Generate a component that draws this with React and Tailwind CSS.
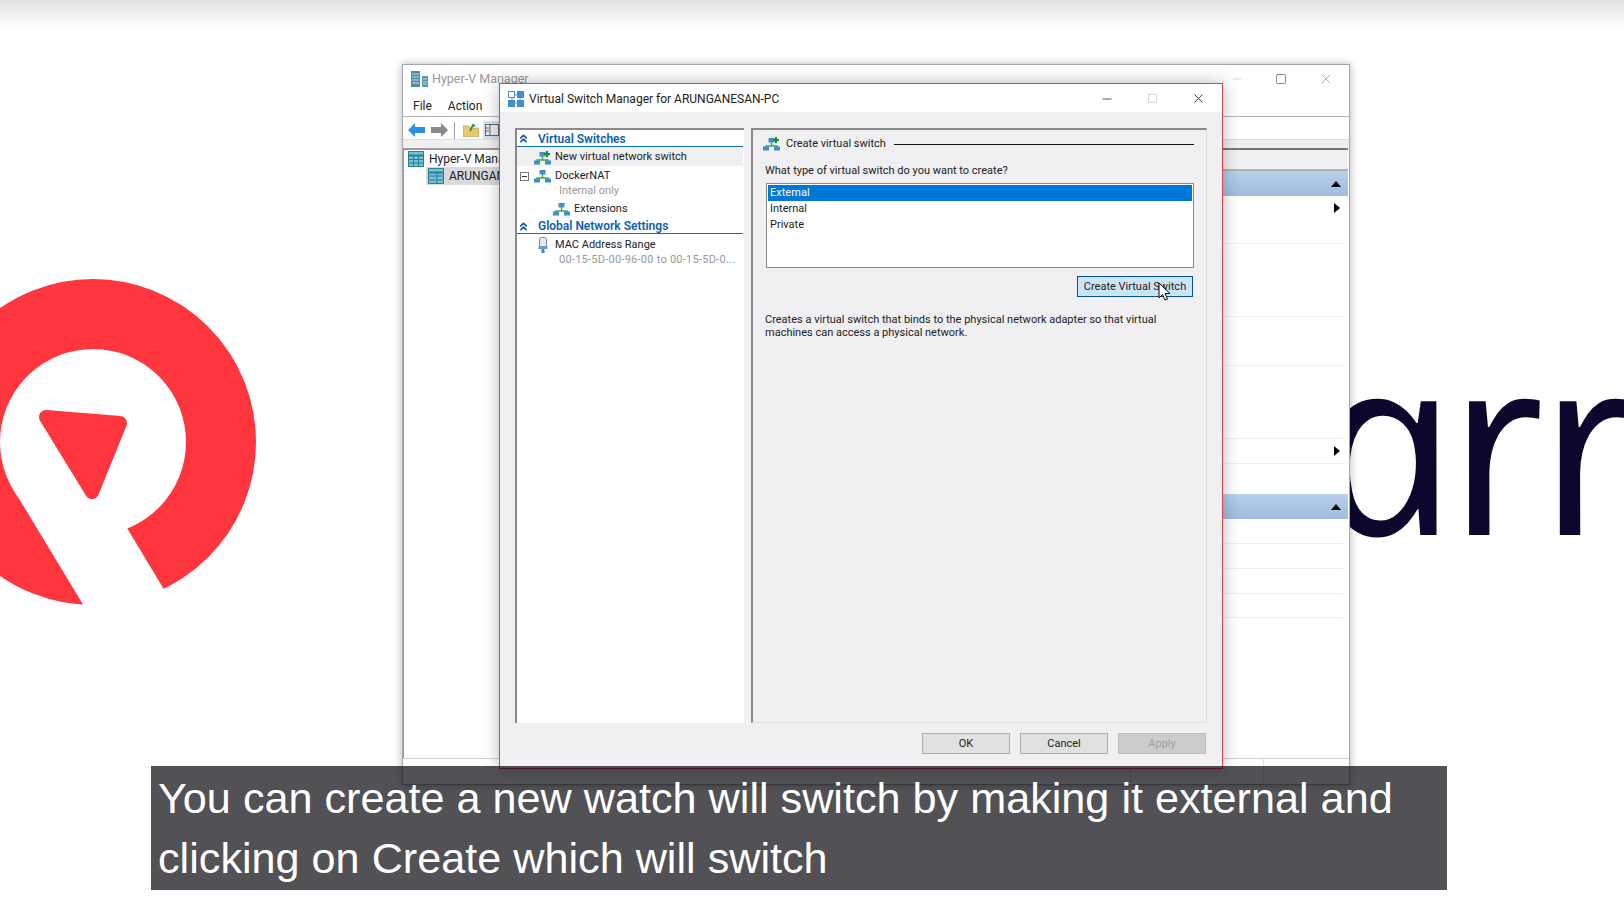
import { ChevronsUp, Minus, Square, X } from 'lucide-react'

const ui = "font-['Roboto',sans-serif]"

function NetIcon({ plus = false, className = '' }) {
  return (
    <svg viewBox="0 0 17 14" className={`h-[14px] w-[17px] shrink-0 ${className}`}>
      <path d="M8.5 5v4M3 12V9h11v3" fill="none" stroke="#4aa63c" strokeWidth="1.4" />
      <rect x="5.5" y="1" width="6" height="4.5" fill="#3f8fd0" />
      <rect x="0" y="9.5" width="6" height="4" fill="#3f8fd0" />
      <rect x="11" y="9.5" width="6" height="4" fill="#3f8fd0" />
      {plus && <path d="M13 0v6M10 3h6" stroke="#14902c" strokeWidth="2.2" />}
    </svg>
  )
}

function ServerIcon() {
  return (
    <svg viewBox="0 0 17 17" className="h-[17px] w-[17px] shrink-0">
      <rect x="0" y="0" width="9" height="16" fill="#4f8ea3" />
      <rect x="11" y="5" width="6" height="11" fill="#5b97ab" />
      <path d="M1 3h7M1 6h7M1 9h7M1 12h7M12 8h4M12 11h4M12 13h4" stroke="#b8dbe6" strokeWidth="1" />
    </svg>
  )
}

function GridIcon({ small = false }) {
  return (
    <svg viewBox="0 0 16 16" className="h-4 w-4 shrink-0">
      <rect x="0.5" y="0.5" width="15" height="15" fill="#6fc3d6" stroke="#2d7f95" />
      <path d="M0 4.5h16" stroke="#2d7f95" strokeWidth="2" />
      {small ? (
        <path d="M9 4v12M9 8h7M9 12h7M0 8h9M0 12h9" stroke="#2d7f95" />
      ) : (
        <path d="M5.5 4v12M10.5 4v12M0 8.5h16M0 12h16" stroke="#2d7f95" />
      )}
    </svg>
  )
}

function MacIcon() {
  return (
    <svg viewBox="0 0 10 16" className="ml-[3px] mr-[3px] h-4 w-[10px] shrink-0">
      <rect x="1.5" y="0.5" width="7" height="10" rx="2" fill="#e8e8e8" stroke="#7d8a96" />
      <rect x="0.5" y="9" width="9" height="3" fill="#5aa0d8" />
      <rect x="3.5" y="12" width="3" height="4" fill="#4a86b8" />
    </svg>
  )
}

function Triangle({ up = false }) {
  return up ? (
    <svg viewBox="0 0 10 6" className="h-[6px] w-[10px]"><path d="M5 0l5 6H0z" fill="#000" /></svg>
  ) : (
    <svg viewBox="0 0 6 10" className="h-[10px] w-[6px]"><path d="M0 0l6 5-6 5z" fill="#000" /></svg>
  )
}

function SectionHeader({ label, className = '' }) {
  return (
    <div className={`flex items-center border-b border-[#0f6cbd] pt-px text-[12px] font-semibold text-[#0d5fb3] ${className}`}>
      <ChevronsUp className="ml-0 h-[13px] w-[13px]" strokeWidth={3.2} />
      <span className="ml-[8px]">{label}</span>
    </div>
  )
}

function ActionRow({ h, arrow = false, line = true }) {
  return (
    <div className={`flex items-start justify-end pr-[3px] pt-[7px] ${line ? 'mr-[5px] border-b border-[#efeff1]' : ''}`} style={{ height: h }}>
      {arrow && <Triangle />}
    </div>
  )
}

function DialogButton({ label, disabled = false }) {
  return (
    <button className={`h-[21px] w-[88px] border pt-px text-[11px] ${disabled ? 'border-[#bfbfbf] bg-[#cccccc] text-[#a0a0a0]' : 'border-[#adadad] bg-[#e1e1e1] text-[#222]'}`}>
      {label}
    </button>
  )
}

function HyperVWindow() {
  return (
    <div className={`absolute left-[402px] top-[64px] flex h-[721px] w-[948px] flex-col border border-[#a8a8a8] bg-white shadow-[0_0_8px_rgba(0,0,0,0.3)] ${ui}`}>
      <div className="flex h-[30px] items-center pb-[2px] pl-[8px] text-[12.5px] text-[#999]">
        <ServerIcon />
        <span className="ml-[4px] flex-1">Hyper-V Manager</span>
        <Minus className="mr-[32px] h-3 w-3 text-[#aaa]" strokeWidth={1} />
        <Square className="mr-[31px] h-3 w-3 text-[#666]" strokeWidth={1.5} />
        <X className="mr-[15px] h-4 w-4 text-[#888]" strokeWidth={1} />
      </div>
      <div className="flex h-[22px] items-center gap-[16px] border-b border-[#b4b4b4] pl-[10px] text-[12px] text-[#222]">
        <span>File</span>
        <span>Action</span>
      </div>
      <div className="flex h-[23px] items-center border-b border-[#dcdcdc] pl-[5px] pt-[4px]">
        <svg viewBox="0 0 17 14" className="h-[14px] w-[17px]"><path d="M0 7l7-7v4h10v6H7v4z" fill="#2e8fe0" /></svg>
        <svg viewBox="0 0 17 14" className="ml-[6px] h-[14px] w-[17px]"><path d="M17 7l-7-7v4H0v6h10v4z" fill="#8a8a8a" /></svg>
        <div className="ml-[6px] h-[17px] w-px bg-[#a0a0a0]" />
        <svg viewBox="0 0 16 14" className="ml-[8px] h-[14px] w-4"><path d="M0 3h6l1 2h9v9H0z" fill="#e8c878" stroke="#b8954a" strokeWidth="0.6" /><path d="M7 8l3-6 2 1" fill="none" stroke="#2e9e3c" strokeWidth="2" /></svg>
        <div className="ml-[4px] flex h-[19px] w-[18px] items-center justify-center bg-[#cce4f7]">
          <svg viewBox="0 0 14 12" className="h-3 w-[14px]"><rect x="0.5" y="0.5" width="13" height="11" fill="#eee" stroke="#666" /><path d="M5 0v12M1 4h3M1 7h3" stroke="#666" /></svg>
        </div>
      </div>
      <div className="h-[8px] bg-[#f0f0f0]" />
      <div className="flex flex-1 border-b border-[#d0d0d0]">
        <div className="w-[161px] border-l border-t-2 border-[#9a9a9a] bg-white text-[12px] text-[#222]">
          <div className="flex h-[17px] items-center gap-[5px] pl-[4px]">
            <GridIcon />
            <span>Hyper-V Manager</span>
          </div>
          <div className="ml-[22px] flex h-[18px] items-center gap-[5px] bg-[#d9d9d9] pl-[2px]">
            <GridIcon small />
            <span>ARUNGANESAN-PC</span>
          </div>
        </div>
        <div className="flex-1 border-t-2 border-[#777]" />
        <div className="mr-px w-[200px] border-t-2 border-[#777]">
          <div className="h-[21px] border-b-2 border-[#b0b0b0] bg-[#f0eff1]" />
          <div className="flex h-[25px] items-center justify-end bg-gradient-to-b from-[#b6d0ec] to-[#9fbcdc] pr-[7px]"><Triangle up /></div>
          <ActionRow h={48} arrow />
          <ActionRow h={73} />
          <ActionRow h={49} />
          <ActionRow h={73} />
          <ActionRow h={25} arrow />
          <ActionRow h={30} line={false} />
          <div className="flex h-[25px] items-center justify-end bg-gradient-to-b from-[#b6d0ec] to-[#9fbcdc] pr-[7px]"><Triangle up /></div>
          <ActionRow h={25} />
          <ActionRow h={25} />
          <ActionRow h={25} />
          <ActionRow h={24} />
        </div>
      </div>
      <div className="flex h-[25px] justify-end">
        <div className="w-[134px] border-x border-[#e2e2e2]" />
        <div className="w-[85px]" />
      </div>
    </div>
  )
}

function SwitchDialog() {
  return (
    <div className={`absolute left-[499px] top-[83px] flex h-[686px] w-[724px] flex-col border border-[#e0404e] bg-[#f0eff1] text-[#222] shadow-[0_0_16px_rgba(0,0,0,0.28)] ${ui}`}>
      <div className="flex h-[28px] items-center bg-white pl-[8px] pt-px text-[12px]">
        <svg viewBox="0 0 16 16" className="h-4 w-4 shrink-0">
          <rect x="0.5" y="0.5" width="6" height="6" fill="#fff" stroke="#3f8fd0" />
          <rect x="9" y="0" width="7" height="7" fill="#3f8fd0" />
          <rect x="0" y="9" width="7" height="7" fill="#3f8fd0" />
          <rect x="9" y="9" width="7" height="7" fill="#3f8fd0" />
          <path d="M7 4h2M4 7v2M12 7v2M7 12h2" stroke="#6a9ac0" />
        </svg>
        <span className="ml-[5px] flex-1">Virtual Switch Manager for ARUNGANESAN-PC</span>
        <Minus className="mr-[33px] h-[14px] w-[14px] text-[#222]" strokeWidth={1.3} />
        <Square className="mr-[33px] h-[11px] w-[11px] text-[#c4c4c4]" strokeWidth={1.5} />
        <X className="mr-[16px] h-[15px] w-[15px] text-[#111]" strokeWidth={1.3} />
      </div>

      <div className="flex min-h-0 flex-1 gap-[7px] pl-[15px] pr-[15px] pt-[16px]">
        <div className="w-[229px] border-l-2 border-t-2 border-[#8a8a8a] bg-white pr-[1px] text-[11px]">
          <SectionHeader label="Virtual Switches" className="h-[17px]" />
          <div className="flex h-[19px] items-center gap-[4px] bg-[#f0f0f0] pl-[17px] pt-[2px]">
            <NetIcon plus />
            <span>New virtual network switch</span>
          </div>
          <div className="flex h-[18px] items-center pl-[3px] pt-[2px]">
            <div className="flex h-[9px] w-[9px] items-center justify-center border border-[#777]"><div className="h-px w-[5px] bg-[#333]" /></div>
            <NetIcon className="ml-[5px]" />
            <span className="ml-[4px]">DockerNAT</span>
          </div>
          <div className="flex h-[14px] items-center pl-[42px] text-[#999]">Internal only</div>
          <div className="flex h-[20px] items-center gap-[4px] pl-[36px] pt-[2px]">
            <NetIcon />
            <span>Extensions</span>
          </div>
          <SectionHeader label="Global Network Settings" className="h-[16px]" />
          <div className="flex h-[20px] items-center gap-[4px] pl-[18px] pt-[2px]">
            <MacIcon />
            <span>MAC Address Range</span>
          </div>
          <div className="flex h-[11px] items-center whitespace-nowrap pl-[42px] pt-px tracking-[0.25px] text-[#999]">00-15-5D-00-96-00 to 00-15-5D-0...</div>
        </div>

        <div className="flex flex-1 flex-col border-b border-l-2 border-r border-t-2 border-b-[#e0e0e0] border-l-[#8a8a8a] border-r-[#e0e0e0] border-t-[#8a8a8a] pl-[12px] pr-[12px] text-[11px]">
          <div className="mt-[5px] flex h-[18px] items-center">
            <NetIcon plus className="-ml-[2px]" />
            <span className="ml-[6px] whitespace-nowrap">Create virtual switch</span>
            <div className="ml-[8px] h-px flex-1 bg-[#111]" />
          </div>
          <div className="mt-[9px] flex h-[16px] items-center pl-0 pt-[2px]">What type of virtual switch do you want to create?</div>
          <div className="mt-[5px] ml-[1px] h-[85px] border border-[#8a8a8a] bg-white p-px">
            <div className="flex h-[16px] items-center bg-[#0078d7] pl-[2px] text-white">External</div>
            <div className="flex h-[16px] items-center pl-[2px]">Internal</div>
            <div className="flex h-[16px] items-center pl-[2px]">Private</div>
          </div>
          <div className="mt-[8px] flex justify-end pr-px">
            <button className="relative h-[21px] w-[116px] border border-[#005499] bg-[#cce4f7] pt-[2px] text-[11px]">
              Create Virtual Switch
              <svg viewBox="0 0 12 20" className="absolute left-[80px] top-[5px] h-5 w-3">
                <path d="M1 1v15l3.5-3.5L7 18l2.5-1-2.5-5.5h5z" fill="#fff" stroke="#000" strokeWidth="1" />
              </svg>
            </button>
          </div>
          <p className="mt-[16px] whitespace-nowrap pl-0 text-[11px] leading-[13px]">
            Creates a virtual switch that binds to the physical network adapter so that virtual
            <br />
            machines can access a physical network.
          </p>
        </div>
      </div>

      <div className="flex h-[45px] items-start justify-end gap-[10px] pr-[16px] pt-[10px]">
        <DialogButton label="OK" />
        <DialogButton label="Cancel" />
        <DialogButton label="Apply" disabled />
      </div>
    </div>
  )
}

export default function App() {
  return (
    <div className="relative h-[912px] w-[1624px] overflow-hidden bg-white">
      <div className="h-[28px] bg-gradient-to-b from-[#e2e2e2] to-white" />

      {/* logo behind the windows */}
      <svg viewBox="0 0 280 350" className="absolute left-0 top-[270px] h-[350px] w-[280px]">
        <circle cx="93" cy="172" r="128" fill="none" stroke="#ff363d" strokeWidth="70" />
        <path d="M12 217L127 258L180 346H90z" fill="#fff" />
        <path d="M46 147L120 153L92 222z" fill="#ff363d" stroke="#ff363d" strokeWidth="14" strokeLinejoin="round" />
      </svg>
      <div className="absolute left-[1308px] top-[313px] skew-x-[12deg] whitespace-nowrap font-['Open_Sans',sans-serif] text-[250px] font-normal italic leading-none tracking-[-8px] text-[#0b072d]">
        arr
      </div>

      <HyperVWindow />
      <SwitchDialog />

      <div className="absolute left-[151px] top-[766px] h-[124px] w-[1296px] bg-[#08080e]/70 px-[7px] pt-[2px] font-['Liberation_Sans',sans-serif] text-[43.2px] leading-[60px] text-white">
        You can create a new watch will switch by making it external and
        <br />
        clicking on Create which will switch
      </div>
    </div>
  )
}
